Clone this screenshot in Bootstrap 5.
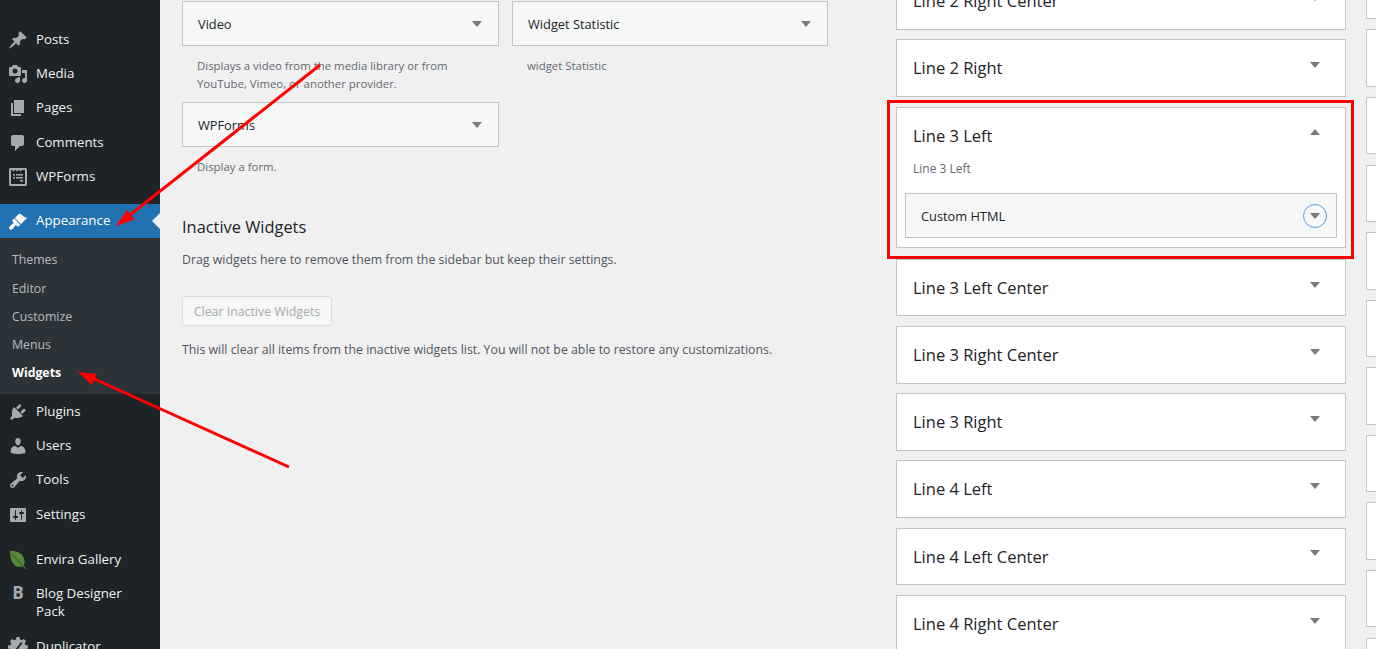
<!DOCTYPE html>
<html lang="en">

<head>
    <meta charset="UTF-8">
    <meta name="viewport" content="width=device-width, initial-scale=1.0">
    <title>Widgets</title>
    <link href="https://cdn.jsdelivr.net/npm/bootstrap@5.3.0/dist/css/bootstrap.min.css" rel="stylesheet">
    <style>
        html, body { height: 649px; overflow: hidden; }
        body { background: #f0f0f1; color: #3c434a; font-family: "Open Sans", "Liberation Sans", sans-serif; font-size: 12.5px; position: relative; }

        /* sidebar */
        .wp-side { width: 160px; height: 649px; background: #1d2327; padding-top: 22.4px; flex: none; overflow: hidden; }
        .wp-item { height: 34.4px; color: #f0f0f1; font-size: 13.3px; text-decoration: none; flex: none; }
        .wp-item svg { width: 20px; height: 20px; margin-left: 8px; margin-right: 8px; fill: #a7aaad; flex: none; }
        .wp-gap { margin-top: 11px; }
        .wp-current { margin-top: 10px; height: 34px; background: #2271b1; color: #fff; position: relative; }
        .wp-current svg { fill: #fff; }
        .wp-current::after { content: ""; position: absolute; right: 0; top: 9px; border: 8px solid transparent; border-right-color: #f0f0f1; }
        .wp-sub { background: #2c3338; padding: 8px 0 7.2px; flex: none; }
        .wp-sub a { display: block; height: 28.2px; line-height: 28px; padding-left: 12px; color: rgba(240,246,252,.7); font-size: 12.3px; text-decoration: none; }
        .wp-sub a.on { color: #fff; font-weight: 700; }
        .wp-b { width: 20px; margin-left: 8px; margin-right: 8px; text-align: center; color: #a7aaad; font-weight: 700; font-size: 17px; flex: none; }
        .wp-two { height: 52px; padding-top: 7px; line-height: 18px; }
        .wp-blog { color: #f0f0f1; text-decoration: none; }

        /* left column */
        .wp-left { width: 736px; padding-left: 22px; flex: none; }
        .wgt-row { width: 646px; margin-top: 1px; }
        .wgt-col { width: 317px; }
        .wgt-col-b { width: 316px; }
        .wgt-next { margin-top: 9px; }
        .wgt-tile { height: 45px; background: #f6f7f7; border: 1px solid #c3c4c7; padding: 3px 16px 0 15px; color: #1d2327; font-size: 12.8px; font-weight: 500; }
        .wgt-tile .caret-dn { margin-top: -2px; }
        .wgt-note { color: #646970; font-size: 11.4px; line-height: 18px; padding: 11px 15px 0; margin: 0; }
        .caret-dn { width: 0; height: 0; border: 5px solid transparent; border-top: 6px solid #787c82; border-bottom: 0; flex: none; }
        .caret-up { width: 0; height: 0; border: 5px solid transparent; border-bottom: 6px solid #787c82; border-top: 0; flex: none; }
        .wgt-h { color: #1d2327; font-size: 16.4px; font-weight: 500; line-height: 20px; margin: 0; padding-top: 41px; }
        .wgt-txt { font-size: 12.33px; line-height: 18px; margin: 0; color: #50575e; }
        .wgt-drag { margin-top: 14px; }
        .wgt-clear { height: 30px; width: 150px; margin-top: 27px; margin-bottom: 15px; background: #f6f7f7; border: 1px solid #dcdcde; border-radius: 3px; color: #a7aaad; font-size: 12.33px; line-height: 29px; text-align: center; }

        /* sidebars column */
        .wp-areas { width: 450px; margin-top: -27.8px; flex: none; }
        .area-box { height: 57.6px; background: #fff; border: 1px solid #c3c4c7; margin-bottom: 9.6px; padding: 1px 25px 0 16px; color: #1d2327; font-size: 16.5px; font-weight: 500; }
        .area-box > .caret-dn { margin-top: -7px; }
        .area-open { height: 141.6px; margin-bottom: 10.7px; padding: 0; display: block !important; }
        .area-head { height: 52px; padding: 0 25px 0 16px; line-height: 56px; }
        .area-head .caret-up { margin-top: 21px; }
        .area-sub { color: #646970; font-size: 12px; padding-left: 16px; line-height: 18px; margin: 0; font-weight: 400; }
        .area-inner { height: 45px; margin: 15.5px 8px 0; background: #f6f7f7; border: 1px solid #c3c4c7; padding: 0 9px 0 15px; font-size: 12.8px; font-weight: 500; }
        .area-inner > span:first-child { padding-top: 2px; }
        .area-toggle { width: 24px; height: 24px; border: 1px solid #5b9dd9; border-radius: 50%; }
        .area-toggle .caret-dn { margin-top: 1px; }
        .far-col { margin-left: 20px; width: 40px; margin-top: -38.2px; flex: none; }
        .far-box { height: 57.4px; background: #fff; border: 1px solid #c3c4c7; margin-bottom: 10.2px; }

        /* annotations over the screenshot */
        .red-frame { position: absolute; left: 887px; top: 100px; width: 467px; height: 159px; border: 3px solid #f00; }
        .red-arrows { position: absolute; left: 0; top: 0; width: 1376px; height: 649px; pointer-events: none; }
    </style>
</head>

<body>
    <div class="d-flex">
        <nav class="wp-side d-flex flex-column">
            <a class="wp-item d-flex align-items-center" href="#"><svg viewBox="0 0 20 20"><path d="M10.44 3.02l1.82-1.82 6.36 6.35-1.83 1.82c-1.05-.68-2.48-.57-3.41.36l-.75.75c-.92.93-1.04 2.35-.35 3.41l-1.83 1.82-2.41-2.41-2.8 2.79c-.42.42-3.38 2.71-3.8 2.29s1.86-3.39 2.28-3.81l2.79-2.79L4.1 9.36l1.83-1.82c1.05.69 2.48.57 3.4-.36l.75-.75c.93-.92 1.05-2.35.36-3.41z"/></svg>Posts</a>
            <a class="wp-item d-flex align-items-center" href="#"><svg viewBox="0 0 20 20"><path d="M13 11V4c0-.55-.45-1-1-1h-1.67L9 1H5L3.67 3H2c-.55 0-1 .45-1 1v7c0 .55.45 1 1 1h10c.55 0 1-.45 1-1zM7 4.5c1.38 0 2.5 1.12 2.5 2.5S8.38 9.5 7 9.5 4.5 8.38 4.5 7 5.62 4.5 7 4.5zM14 6h5v10.5c0 1.38-1.12 2.5-2.5 2.5S14 17.88 14 16.5s1.12-2.5 2.5-2.5c.17 0 .34.02.5.05V9h-3V6zm-4 8.05V13h2v3.5c0 1.38-1.12 2.5-2.5 2.5S7 17.88 7 16.5 8.12 14 9.5 14c.17 0 .34.02.5.05z"/></svg>Media</a>
            <a class="wp-item d-flex align-items-center" href="#"><svg viewBox="0 0 20 20"><path d="M6 15V2h10v13H6zm-1 1h8v2H3V5h2v11z"/></svg>Pages</a>
            <a class="wp-item d-flex align-items-center" href="#"><svg viewBox="0 0 20 20"><path d="M5 2h9c1.1 0 2 .9 2 2v7c0 1.1-.9 2-2 2h-2l-5 5v-5H5c-1.1 0-2-.9-2-2V4c0-1.1.9-2 2-2z"/></svg>Comments</a>
            <a class="wp-item d-flex align-items-center" href="#"><svg viewBox="0 0 20 20"><path fill-rule="evenodd" d="M2.5 1h15c.8 0 1.500.7 1.500 1.500v15c0 .8-.7 1.500-1.500 1.500h-15c-.8 0-1.500-.7-1.500-1.500v-15C1 1.700 1.700 1 2.500 1zm.5 2v14h14V3h-3l-1.500 1.500L11 3h-.5L9 4.500 7.500 3H7L5.500 4.500 4 3H3zm2 4h2v1.500H5V7zm3 0h7v1.500H8V7zm-3 3h2v1.500H5V10zm3 0h7v1.500H8V10zm4 3h3v1.500h-3V13z"/></svg>WPForms</a>
            <a class="wp-item wp-current d-flex align-items-center" href="#"><svg viewBox="0 0 20 20"><path d="M19.500 6.500L13 13 7 7l3-3.500c1-1 2.500-1 3.500 0 .8.800 1.500 1.700 2.800 2.500 1 .6 2.200.8 3.200.5zM12.300 13.700l-1.500 1.500c-.5.5-1.200.5-1.700 0l-.6-.6c-.5-.5-1.200-.4-1.600.2-.9 1.300-2.400 3.800-3.900 3.900-1 .1-2-1-1.900-2 .1-1.500 2.600-3 3.900-3.900.6-.4.700-1.100.2-1.600l-.6-.6c-.5-.5-.5-1.200 0-1.700l1.700-1.700z"/></svg>Appearance</a>
            <div class="wp-sub">
                <a href="#">Themes</a>
                <a href="#">Editor</a>
                <a href="#">Customize</a>
                <a href="#">Menus</a>
                <a class="on" href="#">Widgets</a>
            </div>
            <a class="wp-item d-flex align-items-center" href="#"><svg viewBox="0 0 20 20"><path d="M13.11 4.36L9.87 7.6 8 5.73l3.24-3.24c.35-.34 1.05-.2 1.56.32.52.51.66 1.21.31 1.55zm-8 1.77l.91-1.12 9.01 9.01-1.19.84c-.71.71-2.63 1.16-3.82 1.16H6.14L4.9 17.26c-.59.59-1.54.59-2.12 0-.59-.58-.59-1.53 0-2.12l1.24-1.24v-3.88c0-1.13.4-3.19 1.09-3.89zm7.26 3.97l3.24-3.24c.34-.35 1.04-.21 1.55.31.52.51.66 1.21.31 1.55l-3.24 3.25z"/></svg>Plugins</a>
            <a class="wp-item d-flex align-items-center" href="#"><svg viewBox="0 0 20 20"><path d="M10 9.250c-2.270 0-2.730-3.440-2.730-3.440C7 4.020 7.820 2 9.970 2c2.160 0 2.980 2.020 2.710 3.810 0 0-.41 3.440-2.680 3.440zm0 2.570L12.720 10c2.390 0 4.520 2.330 4.520 4.530v2.490s-3.650 1.130-7.240 1.130c-3.650 0-7.240-1.130-7.240-1.130v-2.490c0-2.250 1.940-4.530 4.470-4.530z"/></svg>Users</a>
            <a class="wp-item d-flex align-items-center" href="#"><svg viewBox="0 0 20 20"><path d="M16.680 9.770c-1.340 1.340-3.300 1.670-4.950.99l-5.410 6.520c-.99.99-2.590.99-3.580 0s-.99-2.590 0-3.570l6.520-5.420c-.68-1.650-.35-3.610.99-4.950 1.280-1.280 3.120-1.620 4.720-1.060l-2.890 2.890 2.820 2.820 2.860-2.870c.53 1.580.18 3.390-1.080 4.650zM3.810 16.210c.4.39 1.040.39 1.430 0 .4-.4.4-1.040 0-1.430-.39-.4-1.030-.4-1.430 0-.39.39-.39 1.030 0 1.430z"/></svg>Tools</a>
            <a class="wp-item d-flex align-items-center" href="#"><svg viewBox="0 0 20 20"><path d="M18 16V4c0-.55-.45-1-1-1H3c-.55 0-1 .45-1 1v12c0 .55.45 1 1 1h14c.55 0 1-.45 1-1zM8 11h1c.55 0 1 .45 1 1s-.45 1-1 1H8v1.500c0 .28-.22.5-.5.5s-.5-.22-.5-.5V13H6c-.55 0-1-.45-1-1s.45-1 1-1h1V5.500c0-.28.22-.5.5-.5s.5.22.5.5V11zm5-2h-1c-.55 0-1-.45-1-1s.45-1 1-1h1V5.500c0-.28.22-.5.5-.5s.5.22.5.5V7h1c.55 0 1 .45 1 1s-.45 1-1 1h-1v5.500c0 .28-.22.5-.5.5s-.5-.22-.5-.5V9z"/></svg>Settings</a>
            <a class="wp-item wp-gap d-flex align-items-center" href="#"><svg viewBox="0 0 20 20"><path fill="#55883a" d="M2 1c6-.5 12 1.500 14 7.500 1 3 .5 5.500-.5 7L18 18.500l-.5.500-3-2.800C12 17.500 8 17 5.500 14 3 11 2 6 2 1z"/><path fill="#2b4d1f" d="M4 3.500l11 12-.5.500L3.500 4z"/></svg>Envira Gallery</a>
            <div class="wp-item wp-two d-flex"><span class="wp-b">B</span><a class="wp-blog" href="#">Blog Designer<br>Pack</a></div>
            <a class="wp-item d-flex align-items-center" href="#"><svg viewBox="0 0 20 20"><path fill-rule="evenodd" d="M8.500 0h3l.5 2.500 1.600.7L15.800 2 18 4.200l-1.300 2.200.7 1.600 2.600.5v3l-2.600.5-.7 1.600L18 15.800 15.800 18l-2.200-1.300-1.600.7-.5 2.600h-3L8 17.400l-1.600-.7L4.200 18 2 15.800l1.300-2.200L2.600 12 0 11.500v-3L2.600 8l.7-1.600L2 4.200 4.200 2l2.200 1.200L8 2.500zM13 5l-6 8 1.500 1 6-8z"/></svg>Duplicator</a>
        </nav>

        <main class="wp-left">
            <div class="wgt-row d-flex justify-content-between align-items-start">
                <div class="wgt-col">
                    <div class="wgt-tile d-flex align-items-center justify-content-between"><span>Video</span><span class="caret-dn"></span></div>
                    <p class="wgt-note">Displays a video from the media library or from<br>YouTube, Vimeo, or another provider.</p>
                </div>
                <div class="wgt-col-b">
                    <div class="wgt-tile d-flex align-items-center justify-content-between"><span>Widget Statistic</span><span class="caret-dn"></span></div>
                    <p class="wgt-note">widget Statistic</p>
                </div>
            </div>
            <div class="wgt-col wgt-next">
                <div class="wgt-tile d-flex align-items-center justify-content-between"><span>WPForms</span><span class="caret-dn"></span></div>
                <p class="wgt-note">Display a form.</p>
            </div>
            <h2 class="wgt-h">Inactive Widgets</h2>
            <p class="wgt-txt wgt-drag">Drag widgets here to remove them from the sidebar but keep their settings.</p>
            <div class="wgt-clear">Clear Inactive Widgets</div>
            <p class="wgt-txt">This will clear all items from the inactive widgets list. You will not be able to restore any customizations.</p>
        </main>

        <section class="wp-areas">
            <div class="area-box d-flex align-items-center justify-content-between"><span>Line 2 Right Center</span><span class="caret-dn"></span></div>
            <div class="area-box d-flex align-items-center justify-content-between"><span>Line 2 Right</span><span class="caret-dn"></span></div>
            <div class="area-box area-open">
                <div class="area-head d-flex align-items-start justify-content-between"><span>Line 3 Left</span><span class="caret-up"></span></div>
                <p class="area-sub">Line 3 Left</p>
                <div class="area-inner d-flex align-items-center justify-content-between"><span>Custom HTML</span><span class="area-toggle d-flex align-items-center justify-content-center"><span class="caret-dn"></span></span></div>
            </div>
            <div class="area-box d-flex align-items-center justify-content-between"><span>Line 3 Left Center</span><span class="caret-dn"></span></div>
            <div class="area-box d-flex align-items-center justify-content-between"><span>Line 3 Right Center</span><span class="caret-dn"></span></div>
            <div class="area-box d-flex align-items-center justify-content-between"><span>Line 3 Right</span><span class="caret-dn"></span></div>
            <div class="area-box d-flex align-items-center justify-content-between"><span>Line 4 Left</span><span class="caret-dn"></span></div>
            <div class="area-box d-flex align-items-center justify-content-between"><span>Line 4 Left Center</span><span class="caret-dn"></span></div>
            <div class="area-box d-flex align-items-center justify-content-between"><span>Line 4 Right Center</span><span class="caret-dn"></span></div>
        </section>

        <aside class="far-col">
            <div class="far-box"></div>
            <div class="far-box"></div>
            <div class="far-box"></div>
            <div class="far-box"></div>
            <div class="far-box"></div>
            <div class="far-box"></div>
            <div class="far-box"></div>
            <div class="far-box"></div>
            <div class="far-box"></div>
            <div class="far-box"></div>
            <div class="far-box"></div>
        </aside>
    </div>

    <div class="red-frame"></div>
    <svg class="red-arrows" viewBox="0 0 1376 649">
        <line x1="320" y1="65" x2="126" y2="218" stroke="#f00" stroke-width="3"/>
        <polygon points="116,226 127,210 134.500,219.500" fill="#f00"/>
        <line x1="289" y1="467" x2="90" y2="377" stroke="#f00" stroke-width="3"/>
        <polygon points="78,372 96.900,373.900 91.900,384.900" fill="#f00"/>
    </svg>

    <script src="https://cdn.jsdelivr.net/npm/bootstrap@5.3.0/dist/js/bootstrap.bundle.min.js"></script>
</body>

</html>
